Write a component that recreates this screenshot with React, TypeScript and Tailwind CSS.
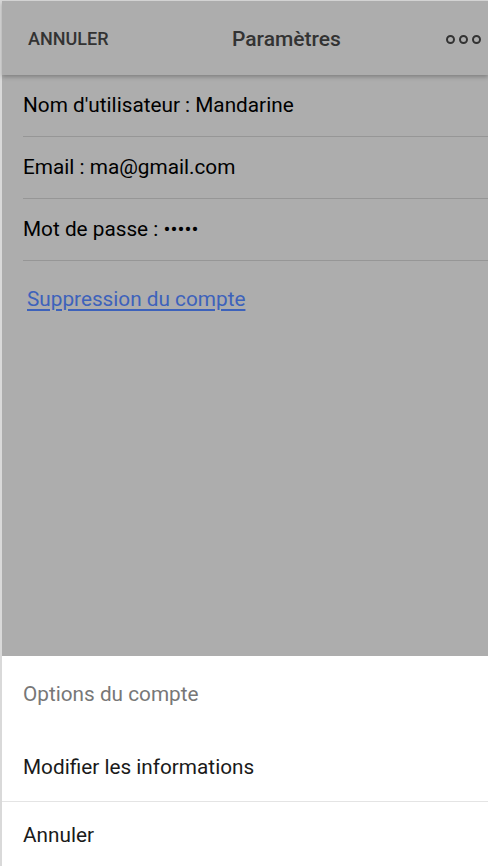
export default function App() {
  const rows = ["Nom d'utilisateur : Mandarine", "Email : ma@gmail.com", "Mot de passe : •••••"];

  return (
    <div
      className="flex h-[866px] w-full flex-col border-l-2 border-t border-[#d9d9d9] bg-[#adadad]"
      style={{ fontFamily: "Roboto, 'Liberation Sans', sans-serif" }}
    >
      {/* Header */}
      <div className="relative z-10 flex h-[74px] shrink-0 items-center bg-[#adadad] pl-[26px] pr-[6px] shadow-[0_2px_4px_rgba(0,0,0,0.25)]">
        <span className="w-[204px] text-[18px] font-medium text-[#333]">ANNULER</span>
        <span className="pt-[3px] text-[21px] font-medium text-[#333]">Paramètres</span>
        <div className="ml-auto flex gap-[4px] pr-[1px] pt-[2px]">
          <span className="h-[9px] w-[9px] rounded-full border-[2.5px] border-[#333]" />
          <span className="h-[9px] w-[9px] rounded-full border-[2.5px] border-[#333]" />
          <span className="h-[9px] w-[9px] rounded-full border-[2.5px] border-[#333]" />
        </div>
      </div>

      {/* Fields */}
      <div className="pl-[21px]">
        {rows.map((r) => (
          <div key={r} className="flex h-[62px] items-center border-b border-[#969696] text-[20.75px] text-black">
            {r}
          </div>
        ))}
      </div>
      <div className="pl-[25px] pt-[23px]">
        <a className="text-[20.75px] text-[#3d62bb] underline underline-offset-[3px]">Suppression du compte</a>
      </div>

      <div className="flex-1" />

      {/* Bottom sheet */}
      <div className="shrink-0 bg-white">
        <div className="flex h-[74px] items-center pl-[21px] pt-[4px] text-[20.75px] text-[#777]">Options du compte</div>
        <div className="flex h-[72px] items-center border-b border-[#e4e4e4] pl-[21px] pt-[4px] text-[20.75px] text-[#1a1a1a]">
          Modifier les informations
        </div>
        <div className="flex h-[64px] items-center pl-[21px] pt-[4px] text-[20.75px] text-[#1a1a1a]">Annuler</div>
      </div>
    </div>
  );
}
